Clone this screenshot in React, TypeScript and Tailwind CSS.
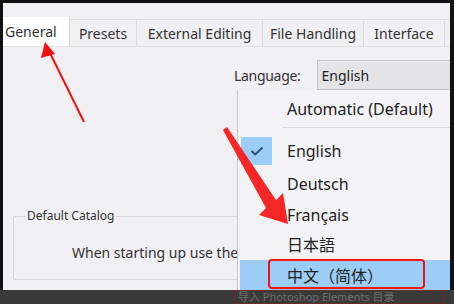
import React from "react";

const font = { fontFamily: '"Noto Sans", "Noto Sans CJK SC", sans-serif' };

function Tab({ label, w, active }: { label: string; w: number; active?: boolean }) {
  return (
    <div
      className={
        active
          ? "h-[29px] bg-white flex items-center pl-[2px] text-[14px] text-[#333] border-r border-[#dcdcdc]"
          : "h-[27px] bg-[#f0eff2] flex items-center justify-center text-[14px] text-[#333] border-r border-t border-[#dcdcdc]"
      }
      style={{ width: w }}
    >
      {label}
    </div>
  );
}

export default function App() {
  return (
    <div className="w-[454px] h-[304px] bg-[#111] flex flex-col overflow-hidden" style={font}>
      <div className="flex-1 mt-[3px] ml-[3px] mr-[4px] bg-[#f0eff2] flex flex-col relative">
        {/* tabs */}
        <div className="h-[44px] flex items-end border-b border-[#e2e2e2]">
          <Tab label="General" w={67} active />
          <Tab label="Presets" w={67} />
          <Tab label="External Editing" w={126} />
          <Tab label="File Handling" w={101} />
          <Tab label="Interface" w={81} />
          <div className="h-[27px] flex-1 border-t border-[#dcdcdc]" />
        </div>
        {/* content */}
        <div className="flex-1 relative flex flex-col">
          <div className="flex items-center mt-[13px] h-[30px]">
            <span className="ml-[231px] text-[14px] tracking-[-0.3px] text-[#333]">Language:</span>
            <div className="ml-[16px] flex-1 h-[30px] bg-[#e4e4e6] border border-[#c4c4c4] border-r-0 flex items-center pl-[4px] text-[14px] text-[#222]">
              English
            </div>
          </div>
          <div className="mt-[126px] ml-[10px] w-[260px] h-[64px] border border-[#d6d6d8] rounded-[2px] relative">
            <span className="absolute left-[11px] top-[-10px] bg-[#f0eff2] px-[2px] text-[12px] text-[#333]">
              Default Catalog
            </span>
            <div className="mt-[25px] ml-[58px] text-[14px] text-[#333] whitespace-nowrap">
              When starting up use the
            </div>
          </div>

          {/* dropdown menu */}
          <div className="absolute left-[234px] top-[43px] right-0 bottom-0 bg-[#f3f3f5] border-l border-[#c8c8cc] flex flex-col text-[16px] text-[#222]">
            <div className="h-[36px] flex items-center pl-[49px] whitespace-nowrap mt-[1px]">Automatic (Default)</div>
            <div className="h-px bg-[#d8d8da] ml-[44px]" />
            <div className="h-[34px] flex items-center relative mt-[6px]">
              <div className="ml-[3px] w-[31px] h-[28px] bg-[#9ccdf6] flex items-center justify-center">
                <svg width="14" height="10" viewBox="0 0 14 10">
                  <path d="M1.5 5 L5.2 8.5 L12.5 1.5" stroke="#2c4b6b" strokeWidth="1.8" fill="none" />
                </svg>
              </div>
              <span className="ml-[15px]">English</span>
            </div>
            <div className="h-[31px] flex items-center pl-[49px]">Deutsch</div>
            <div className="h-[31px] flex items-center pl-[49px]">Français</div>
            <div className="h-[30px] flex items-center pl-[49px]">日本語</div>
            <div className="flex-1 bg-[#9ccdf6] ml-[2px] flex items-center pl-[47px] pt-[2px] relative">
              中文（简体）
              <div className="absolute left-[28px] top-[-1px] w-[157px] h-[30px] border-[2.5px] border-[#f01414] rounded-[4px]" />
            </div>
          </div>
        </div>

        {/* arrows */}
        <svg className="absolute left-0 top-0 pointer-events-none" width="447" height="287" viewBox="3 3 447 287">
          <line x1="84" y1="122" x2="50" y2="53" stroke="#f01010" strokeWidth="2" />
          <polygon points="45,42 41,58 55,54" fill="#f01010" />
          <polygon points="223,130 227,127 276,200 283,193 288,224 259,215 266,208" fill="#f42626" />
        </svg>
      </div>
      <div className="h-[14px] bg-[#3a3a3a] flex items-center relative">
        <div className="ml-[234px] h-[14px] w-[210px] border border-[#6a2a2a] text-[11px] leading-[12px] text-[#6f6f6f] pl-[3px] whitespace-nowrap overflow-hidden">
          导入 Photoshop Elements 目录
        </div>
      </div>
    </div>
  );
}
